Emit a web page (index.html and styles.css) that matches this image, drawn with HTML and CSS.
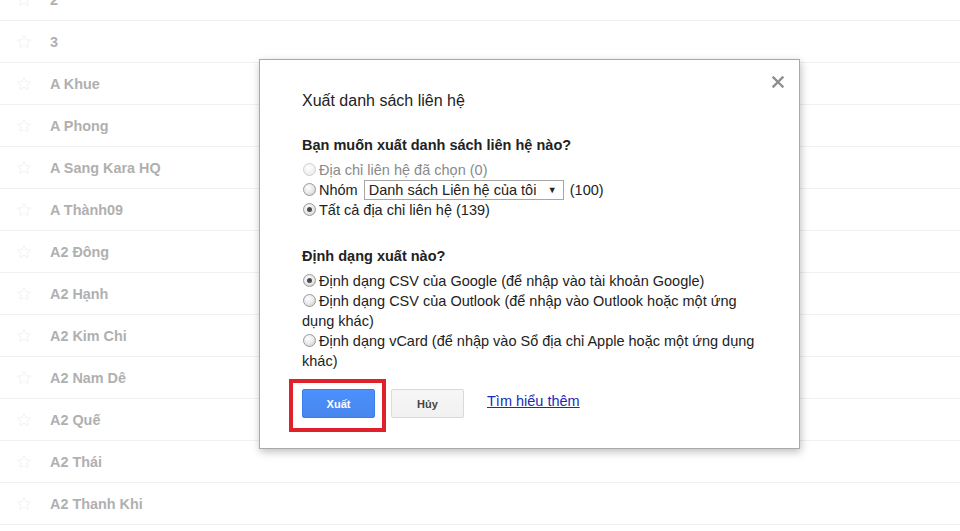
FILE: index.html
```html
<!DOCTYPE html>
<html lang="vi">
<head>
<meta charset="utf-8">
<title>Xuất danh sách liên hệ</title>
<link rel="stylesheet" href="styles.css">
</head>
<body>
<div class="list">
  <div class="row"><span class="star"><svg viewBox="0 0 16 16" width="16" height="16"><path d="M8 1.5l1.9 4.2 4.6.4-3.5 3 1.1 4.5L8 11.2l-4.1 2.4 1.1-4.5-3.5-3 4.6-.4z" fill="none" stroke="currentColor" stroke-width="1"/></svg></span><span class="name">2</span></div>
  <div class="row"><span class="star"><svg viewBox="0 0 16 16" width="16" height="16"><path d="M8 1.5l1.9 4.2 4.6.4-3.5 3 1.1 4.5L8 11.2l-4.1 2.4 1.1-4.5-3.5-3 4.6-.4z" fill="none" stroke="currentColor" stroke-width="1"/></svg></span><span class="name">3</span></div>
  <div class="row"><span class="star"><svg viewBox="0 0 16 16" width="16" height="16"><path d="M8 1.5l1.9 4.2 4.6.4-3.5 3 1.1 4.5L8 11.2l-4.1 2.4 1.1-4.5-3.5-3 4.6-.4z" fill="none" stroke="currentColor" stroke-width="1"/></svg></span><span class="name">A Khue</span></div>
  <div class="row"><span class="star"><svg viewBox="0 0 16 16" width="16" height="16"><path d="M8 1.5l1.9 4.2 4.6.4-3.5 3 1.1 4.5L8 11.2l-4.1 2.4 1.1-4.5-3.5-3 4.6-.4z" fill="none" stroke="currentColor" stroke-width="1"/></svg></span><span class="name">A Phong</span></div>
  <div class="row"><span class="star"><svg viewBox="0 0 16 16" width="16" height="16"><path d="M8 1.5l1.9 4.2 4.6.4-3.5 3 1.1 4.5L8 11.2l-4.1 2.4 1.1-4.5-3.5-3 4.6-.4z" fill="none" stroke="currentColor" stroke-width="1"/></svg></span><span class="name">A Sang Kara HQ</span></div>
  <div class="row"><span class="star"><svg viewBox="0 0 16 16" width="16" height="16"><path d="M8 1.5l1.9 4.2 4.6.4-3.5 3 1.1 4.5L8 11.2l-4.1 2.4 1.1-4.5-3.5-3 4.6-.4z" fill="none" stroke="currentColor" stroke-width="1"/></svg></span><span class="name">A Thành09</span></div>
  <div class="row"><span class="star"><svg viewBox="0 0 16 16" width="16" height="16"><path d="M8 1.5l1.9 4.2 4.6.4-3.5 3 1.1 4.5L8 11.2l-4.1 2.4 1.1-4.5-3.5-3 4.6-.4z" fill="none" stroke="currentColor" stroke-width="1"/></svg></span><span class="name">A2 Đông</span></div>
  <div class="row"><span class="star"><svg viewBox="0 0 16 16" width="16" height="16"><path d="M8 1.5l1.9 4.2 4.6.4-3.5 3 1.1 4.5L8 11.2l-4.1 2.4 1.1-4.5-3.5-3 4.6-.4z" fill="none" stroke="currentColor" stroke-width="1"/></svg></span><span class="name">A2 Hạnh</span></div>
  <div class="row"><span class="star"><svg viewBox="0 0 16 16" width="16" height="16"><path d="M8 1.5l1.9 4.2 4.6.4-3.5 3 1.1 4.5L8 11.2l-4.1 2.4 1.1-4.5-3.5-3 4.6-.4z" fill="none" stroke="currentColor" stroke-width="1"/></svg></span><span class="name">A2 Kim Chi</span></div>
  <div class="row"><span class="star"><svg viewBox="0 0 16 16" width="16" height="16"><path d="M8 1.5l1.9 4.2 4.6.4-3.5 3 1.1 4.5L8 11.2l-4.1 2.4 1.1-4.5-3.5-3 4.6-.4z" fill="none" stroke="currentColor" stroke-width="1"/></svg></span><span class="name">A2 Nam Dê</span></div>
  <div class="row"><span class="star"><svg viewBox="0 0 16 16" width="16" height="16"><path d="M8 1.5l1.9 4.2 4.6.4-3.5 3 1.1 4.5L8 11.2l-4.1 2.4 1.1-4.5-3.5-3 4.6-.4z" fill="none" stroke="currentColor" stroke-width="1"/></svg></span><span class="name">A2 Quế</span></div>
  <div class="row"><span class="star"><svg viewBox="0 0 16 16" width="16" height="16"><path d="M8 1.5l1.9 4.2 4.6.4-3.5 3 1.1 4.5L8 11.2l-4.1 2.4 1.1-4.5-3.5-3 4.6-.4z" fill="none" stroke="currentColor" stroke-width="1"/></svg></span><span class="name">A2 Thái</span></div>
  <div class="row"><span class="star"><svg viewBox="0 0 16 16" width="16" height="16"><path d="M8 1.5l1.9 4.2 4.6.4-3.5 3 1.1 4.5L8 11.2l-4.1 2.4 1.1-4.5-3.5-3 4.6-.4z" fill="none" stroke="currentColor" stroke-width="1"/></svg></span><span class="name">A2 Thanh Khi</span></div>
</div>

<div class="dialog">
  <button class="close" aria-label="Đóng"><svg viewBox="0 0 12 12" width="12" height="12"><path d="M1.5 1.5l9 9M10.5 1.5l-9 9" stroke="#8f8f8f" stroke-width="2.4" stroke-linecap="square"/></svg></button>
  <div class="title">Xuất danh sách liên hệ</div>
  <div class="heading first">Bạn muốn xuất danh sách liên hệ nào?</div>
  <div class="opt disabled"><span class="radio"></span>Địa chỉ liên hệ đã chọn (0)</div>
  <div class="opt"><span class="radio"></span>Nhóm <span class="select"><span class="sel-text">Danh sách Liên hệ của tôi</span><span class="arrow">▼</span></span> (100)</div>
  <div class="opt"><span class="radio on"></span>Tất cả địa chỉ liên hệ (139)</div>
  <div class="heading second">Định dạng xuất nào?</div>
  <div class="opt"><span class="radio on"></span>Định dạng CSV của Google (để nhập vào tài khoản Google)</div>
  <div class="opt"><span class="radio"></span>Định dạng CSV của Outlook (để nhập vào Outlook hoặc một ứng dụng khác)</div>
  <div class="opt"><span class="radio"></span>Định dạng vCard (để nhập vào Sổ địa chỉ Apple hoặc một ứng dụng khác)</div>
  <div class="actions">
    <span class="btn-wrap"><button class="btn primary">Xuất</button><span class="highlight"></span></span>
    <button class="btn">Hủy</button>
    <a class="link" href="#">Tìm hiểu thêm</a>
  </div>
</div>
</body>
</html>
```

FILE: styles.css
```css
html, body {
  margin: 0;
  padding: 0;
  background: #fff;
  width: 960px;
  height: 531px;
  overflow: hidden;
  font-family: "Liberation Sans", Arial, sans-serif;
}

.list {
  margin-top: -21px;
}

.row {
  height: 41px;
  border-bottom: 1px solid #f1f1f1;
  display: flex;
  align-items: center;
}

.star {
  width: 50px;
  display: flex;
  justify-content: center;
  padding-right: 2px;
  box-sizing: border-box;
  color: #f3f3f3;
}

.star svg {
  display: block;
}

.name {
  font-size: 14.4px;
  font-weight: bold;
  color: #b0b0b0;
}

.dialog {
  position: absolute;
  left: 259px;
  top: 59px;
  width: 455px;
  padding: 31px 42px 30px 42px;
  background: #fff;
  border: 1px solid #a9a9a9;
  box-shadow: 1px 3px 8px rgba(0, 0, 0, 0.25);
  color: #222;
  font-size: 14.5px;
}

.close {
  position: absolute;
  right: 14px;
  top: 15px;
  width: 14px;
  height: 14px;
  padding: 0;
  border: 0;
  background: none;
  display: flex;
  align-items: center;
  justify-content: center;
}

.title {
  font-size: 16px;
  line-height: 20px;
  color: #222;
}

.heading {
  font-weight: bold;
  font-size: 14.5px;
  line-height: 20px;
  color: #222;
}

.heading.first {
  margin-top: 24px;
  margin-bottom: 5px;
}

.heading.second {
  margin-top: 26px;
  margin-bottom: 5px;
}

.opt {
  line-height: 20px;
  font-size: 14.5px;
  color: #222;
}

.opt.disabled {
  color: #8a8a8a;
}

.radio {
  display: inline-block;
  width: 11px;
  height: 11px;
  border: 1px solid #9a9a9a;
  border-radius: 50%;
  background: radial-gradient(circle at 40% 35%, #ffffff 0%, #e6e6e6 55%, #c8c8c8 100%);
  margin: 0 3px 0 1px;
  vertical-align: -1px;
  box-sizing: content-box;
  position: relative;
}

.disabled .radio {
  border-color: #cfcfcf;
  background: radial-gradient(circle at 40% 35%, #ffffff 0%, #f0f0f0 60%, #e0e0e0 100%);
}

.radio.on::after {
  content: "";
  position: absolute;
  left: 3px;
  top: 3px;
  width: 5px;
  height: 5px;
  border-radius: 50%;
  background: #4a4a4a;
}

.select {
  display: inline-flex;
  align-items: center;
  justify-content: space-between;
  width: 188px;
  height: 18px;
  border: 1px solid #a6a6a6;
  padding: 0 6px 0 4px;
  box-sizing: content-box;
  vertical-align: middle;
  margin: -2px 2px 0 2px;
  background: #fff;
  line-height: 18px;
}

.select .arrow {
  font-size: 9px;
  color: #222;
}

.actions {
  display: flex;
  align-items: center;
  margin-top: 18px;
}

.btn-wrap {
  position: relative;
  display: inline-flex;
}

.btn {
  height: 29px;
  min-width: 73px;
  padding: 0 12px;
  border-radius: 2px;
  font-family: "Liberation Sans", Arial, sans-serif;
  font-size: 11px;
  font-weight: bold;
  border: 1px solid #d9d9d9;
  background: linear-gradient(#f6f6f6, #f1f1f1);
  color: #444;
  margin-right: 16px;
}

.btn.primary {
  background: linear-gradient(#4d90fe, #4787ed);
  border-color: #3b7ee9;
  color: #fff;
}

.highlight {
  position: absolute;
  left: -13px;
  top: -10px;
  width: 89px;
  height: 45px;
  border: 4px solid #e0202b;
  pointer-events: none;
}

.link {
  margin-left: 7px;
  font-size: 14.5px;
  color: #1a2bb8;
  text-decoration: underline;
  margin-top: -6px;
}
```
